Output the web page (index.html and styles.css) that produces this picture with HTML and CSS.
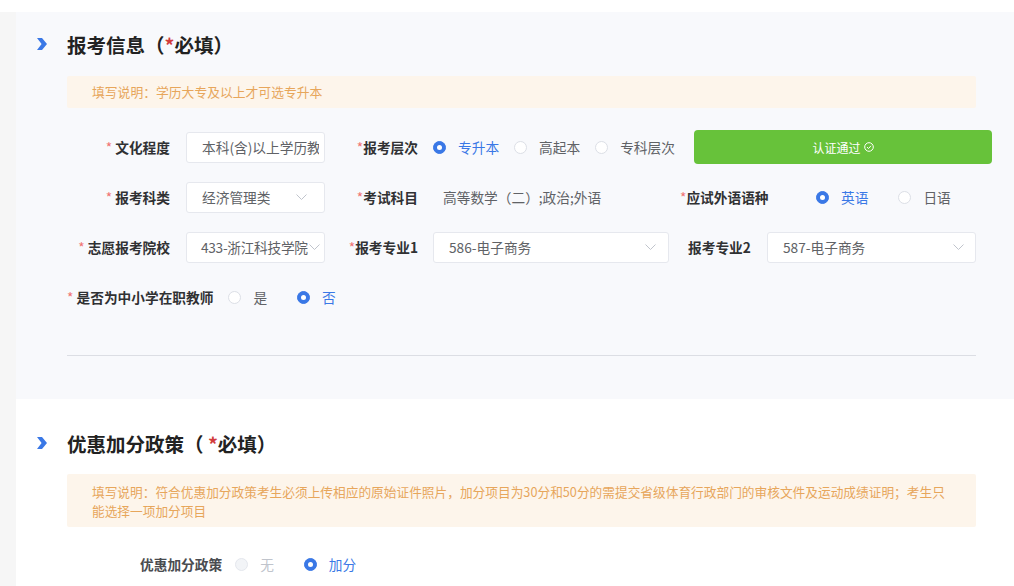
FILE: index.html
```html
<!DOCTYPE html>
<html lang="zh-CN">
<head>
<meta charset="utf-8">
<title>报考信息</title>
<link rel="stylesheet" href="styles.css">
</head>
<body>
<div class="top"></div>
<div class="wrap">
  <div class="content">
    <section class="panel">
      <div class="head">
        <svg class="chev" width="10" height="12" viewBox="0 0 10 12"><polygon points="0,0 5,0 10,6 5,12 0,12 4.6,6" fill="#3a78e6"/></svg>
        <h2 class="title">报考信息（<span class="tstar">*</span>必填）</h2>
      </div>
      <div class="notice">填写说明：学历大专及以上才可选专升本</div>

      <div class="row">
        <div class="lab lab1"><span class="star">*</span> 文化程度</div>
        <div class="box box1"><span class="val">本科(含)以上学历教育</span></div>
        <div class="lab lab2"><span class="star">*</span>报考层次</div>
        <div class="opts opts-level">
          <span class="opt"><span class="radio on"></span><span class="otext on-text">专升本</span></span>
          <span class="opt"><span class="radio"></span><span class="otext">高起本</span></span>
          <span class="opt"><span class="radio"></span><span class="otext">专科层次</span></span>
        </div>
        <div class="btn-ok">认证通过
          <svg class="okicon" width="10" height="10" viewBox="0 0 10 10"><circle cx="5" cy="5" r="4.3" fill="none" stroke="#fff" stroke-width="1"/><polyline points="3,5.1 4.5,6.5 7,3.8" fill="none" stroke="#fff" stroke-width="1"/></svg>
        </div>
      </div>

      <div class="row">
        <div class="lab lab1"><span class="star">*</span> 报考科类</div>
        <div class="box box1 sel-kl"><span class="val">经济管理类</span><svg class="arrow" width="11" height="6" viewBox="0 0 11 6"><polyline points="0.5,0.5 5.5,5.5 10.5,0.5" fill="none" stroke="#c0c4cc" stroke-width="1"/></svg></div>
        <div class="lab lab2"><span class="star">*</span>考试科目</div>
        <div class="plain">高等数学（二）;政治;外语</div>
        <div class="lab lab3a"><span class="star">*</span>应试外语语种</div>
        <div class="opts opts-wide">
          <span class="opt"><span class="radio on"></span><span class="otext on-text">英语</span></span>
          <span class="opt"><span class="radio"></span><span class="otext">日语</span></span>
        </div>
      </div>

      <div class="row">
        <div class="lab lab1"><span class="star">*</span> 志愿报考院校</div>
        <div class="box box1 sel-school"><span class="val">433-浙江科技学院</span><svg class="arrow" width="11" height="6" viewBox="0 0 11 6"><polyline points="0.5,0.5 5.5,5.5 10.5,0.5" fill="none" stroke="#c0c4cc" stroke-width="1"/></svg></div>
        <div class="lab lab2"><span class="star">*</span>报考专业1</div>
        <div class="box box-m1"><span class="val">586-电子商务</span><svg class="arrow" width="11" height="6" viewBox="0 0 11 6"><polyline points="0.5,0.5 5.5,5.5 10.5,0.5" fill="none" stroke="#c0c4cc" stroke-width="1"/></svg></div>
        <div class="lab lab3b">报考专业2</div>
        <div class="box box-m2"><span class="val">587-电子商务</span><svg class="arrow" width="11" height="6" viewBox="0 0 11 6"><polyline points="0.5,0.5 5.5,5.5 10.5,0.5" fill="none" stroke="#c0c4cc" stroke-width="1"/></svg></div>
      </div>

      <div class="row">
        <div class="lab lab-free"><span class="star">*</span> 是否为中小学在职教师</div>
        <div class="opts opts-wide">
          <span class="opt"><span class="radio"></span><span class="otext">是</span></span>
          <span class="opt"><span class="radio on"></span><span class="otext on-text">否</span></span>
        </div>
      </div>

      <div class="divider"></div>
    </section>

    <section class="sec2">
      <div class="head">
        <svg class="chev" width="10" height="12" viewBox="0 0 10 12"><polygon points="0,0 5,0 10,6 5,12 0,12 4.6,6" fill="#3a78e6"/></svg>
        <h2 class="title">优惠加分政策（ <span class="tstar">*</span>必填）</h2>
      </div>
      <div class="notice notice2">填写说明：符合优惠加分政策考生必须上传相应的原始证件照片，加分项目为30分和50分的需提交省级体育行政部门的审核文件及运动成绩证明；考生只<br>能选择一项加分项目</div>
      <div class="row row2">
        <div class="lab lab-policy">优惠加分政策</div>
        <div class="opts opts-wide">
          <span class="opt"><span class="radio dis"></span><span class="otext dis-text">无</span></span>
          <span class="opt"><span class="radio on"></span><span class="otext on-text">加分</span></span>
        </div>
      </div>
    </section>
  </div>
</div>
</body>
</html>
```

FILE: styles.css
```css
* { box-sizing: border-box; }
html, body { margin: 0; padding: 0; }
body {
  background: #ffffff;
  font-family: "Noto Sans CJK SC", "Noto Sans", "Liberation Sans", sans-serif;
  color: #606266;
  width: 1014px;
  height: 586px;
  overflow: hidden;
}
.top { height: 12px; background: #ffffff; }
.wrap { background: #f6f6f6; padding-left: 16px; }
.content { background: #ffffff; }

.panel {
  background: #f8f9fc;
  padding: 21px 38px 43px 51px;
}
.sec2 {
  background: #ffffff;
  padding: 33px 38px 6px 51px;
}
.head {
  display: flex;
  align-items: center;
  height: 24px;
  margin-left: -30px;
}
.chev { display: block; margin-right: 20px; margin-top: -2px; }
.title {
  margin: 0;
  font-size: 19.5px;
  font-weight: 700;
  color: #222222;
  line-height: 24px;
}
.tstar { color: #d23c3c; }

.notice {
  margin-top: 19px;
  background: #fdf5eb;
  color: #e7a65b;
  font-size: 12.8px;
  line-height: 32px;
  height: 32px;
  padding: 0 25px;
  border-radius: 2px;
  white-space: nowrap;
}
.notice2 {
  margin-top: 18px;
  height: auto;
  line-height: 19px;
  padding: 8px 0 7px 25px;
  font-size: 12.7px;
}

.row {
  display: flex;
  align-items: center;
  height: 34px;
  margin-top: 16px;
  font-size: 13.7px;
}
.notice + .row { margin-top: 22px; }
.sec2 .notice + .row { margin-top: 20px; }

.lab {
  font-weight: 700;
  color: #303133;
  white-space: nowrap;
  flex: none;
}
.star { color: #f07373; font-weight: 400; }
.lab1 { width: 103px; text-align: right; margin-right: 16px; }
.lab2 { width: 93px; text-align: right; margin-right: 15px; }
.lab3a { width: 88px; margin-right: 48px; }
.lab3b { width: 64px; margin-left: 19px; margin-right: 15px; }
.lab-free { margin-right: 15px; }
.lab-policy { margin-left: 73px; margin-right: 13px; color: #4a4c50; }

.box {
  flex: none;
  height: 31px;
  background: #ffffff;
  border: 1px solid #e6e8ee;
  border-radius: 3px;
  display: flex;
  align-items: center;
  padding-left: 15px;
  color: #606266;
  overflow: hidden;
}
.box .val { white-space: nowrap; overflow: hidden; flex: 1; }
.box1 { width: 139px; padding-right: 7px; }
.box1 .val { flex: none; width: 117px; overflow: hidden; }
.sel-kl .val { width: 92px; }
.sel-kl { padding-right: 17px; }
.sel-school { padding-left: 14px; padding-right: 2px; }
.sel-school .val { width: auto; overflow: visible; letter-spacing: -0.3px; }
.sel-school .arrow { margin-left: 1px; }
.box-m1 { width: 236px; padding-right: 12px; }
.box-m2 { width: 209px; padding-right: 11px; }
.arrow { flex: none; display: block; margin-left: auto; }

.plain { width: 247px; padding-left: 10px; color: #606266; flex: none; }

.opts { display: flex; align-items: center; flex: none; }
.opts-level { width: 261px; }
.opt { display: flex; align-items: center; }
.opts-level .opt { margin-right: 15px; }
.opts-wide .opt { margin-right: 30px; }
.radio {
  width: 13px;
  height: 13px;
  border-radius: 50%;
  border: 1px solid #dcdfe6;
  background: #ffffff;
  position: relative;
  margin-right: 12px;
  flex: none;
}
.radio.on { background: #3a78e6; border-color: #3a78e6; }
.radio.on::after {
  content: "";
  position: absolute;
  left: 50%;
  top: 50%;
  width: 5px;
  height: 5px;
  margin: -2.5px 0 0 -2.5px;
  border-radius: 50%;
  background: #ffffff;
}
.radio.dis { background: #f2f4f7; border-color: #e4e7ed; }
.otext { color: #606266; white-space: nowrap; }
.on-text { color: #3a78e6; }
.dis-text { color: #c0c4cc; }

.btn-ok {
  flex: none;
  width: 298px;
  height: 34px;
  background: #67c23a;
  border-radius: 4px;
  color: #ffffff;
  font-size: 12px;
  display: flex;
  align-items: center;
  justify-content: center;
}
.okicon { margin-left: 3px; display: block; }

.divider {
  margin-top: 41px;
  height: 1px;
  background: #dcdee4;
}
```
